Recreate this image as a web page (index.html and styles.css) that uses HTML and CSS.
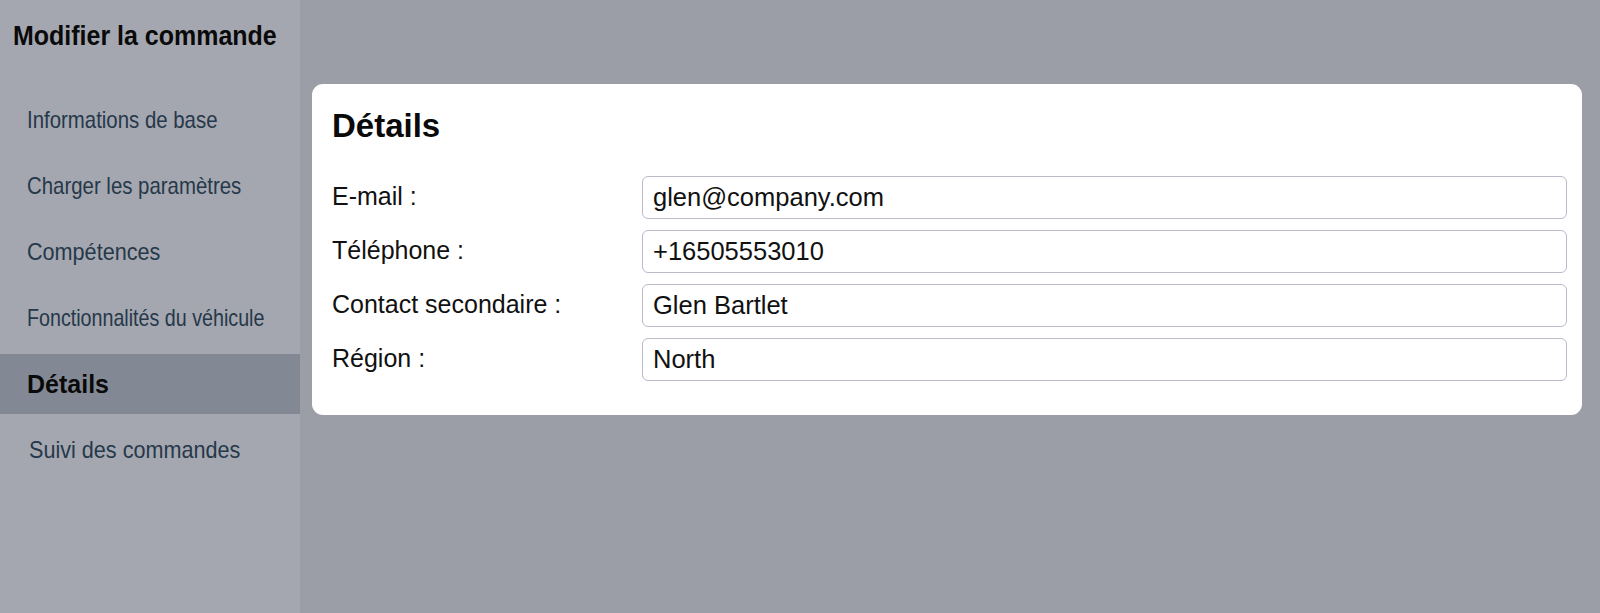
FILE: index.html
```html
<!DOCTYPE html>
<html lang="fr">
<head>
<meta charset="utf-8">
<title>Modifier la commande</title>
<link rel="stylesheet" href="styles.css">
</head>
<body>
<div class="app">
  <aside class="sidebar">
    <h1 class="side-title"><span class="cond-title">Modifier la commande</span></h1>
    <nav class="nav">
      <div class="nav-item"><span class="cond">Informations de base</span></div>
      <div class="nav-item"><span class="cond">Charger les paramètres</span></div>
      <div class="nav-item"><span class="cond wide">Compétences</span></div>
      <div class="nav-item"><span class="cond narrow">Fonctionnalités du véhicule</span></div>
      <div class="nav-item active"><span>Détails</span></div>
      <div class="nav-item last"><span class="cond wide">Suivi des commandes</span></div>
    </nav>
  </aside>
  <main class="main">
    <section class="card">
      <h2 class="card-title">Détails</h2>
      <div class="form">
        <div class="label">E-mail :</div>
        <div class="field">glen@company.com</div>
        <div class="label">Téléphone :</div>
        <div class="field">+16505553010</div>
        <div class="label">Contact secondaire :</div>
        <div class="field">Glen Bartlet</div>
        <div class="label">Région :</div>
        <div class="field">North</div>
      </div>
    </section>
  </main>
</div>
</body>
</html>
```
FILE: styles.css
```css
* { box-sizing: border-box; }
html, body {
  margin: 0;
  padding: 0;
  height: 100%;
}
body {
  font-family: "Liberation Sans", Arial, sans-serif;
  color: #111;
  background: #9b9ea6;
}
.app {
  display: flex;
  height: 613px;
}
.sidebar {
  width: 300px;
  flex: 0 0 300px;
  background: #a4a7af;
  padding-top: 20px;
}
.side-title {
  margin: 0 0 0 13px;
  font-size: 27px;
  line-height: 32px;
  font-weight: 700;
  color: #0a0a0a;
  white-space: nowrap;
}
.cond-title {
  display: inline-block;
  transform: scaleX(0.925);
  transform-origin: left center;
}
.nav {
  display: flex;
  flex-direction: column;
  gap: 6px;
  margin-top: 38px;
}
.nav-item {
  height: 60px;
  display: flex;
  align-items: center;
  padding-left: 27px;
  font-size: 24px;
  color: #26384a;
  white-space: nowrap;
}
.nav-item.last {
  padding-left: 29px;
}
.cond {
  display: inline-block;
  transform: scaleX(0.85);
  transform-origin: left center;
}
.cond.wide {
  transform: scaleX(0.9);
}
.cond.narrow {
  transform: scaleX(0.82);
}
.nav-item.active {
  background: #838994;
  font-weight: 700;
  font-size: 25px;
  color: #0a0a0a;
}
.main {
  flex: 1;
  padding: 84px 18px 0 12px;
}
.card {
  background: #fff;
  border-radius: 11px;
  padding: 22px 15px 34px 20px;
}
.card-title {
  margin: 0 0 30px 0;
  font-size: 33px;
  line-height: 40px;
  font-weight: 700;
  color: #0a0a0a;
}
.form {
  display: grid;
  grid-template-columns: 310px 1fr;
  row-gap: 11.5px;
  align-items: center;
}
.label {
  font-size: 25px;
  line-height: 30px;
  color: #111;
  margin-top: -3px;
}
.field {
  height: 42.5px;
  border: 1.5px solid #bbbac9;
  border-radius: 6px;
  padding: 0 10px;
  display: flex;
  align-items: center;
  font-size: 25.5px;
  color: #111;
}
```
